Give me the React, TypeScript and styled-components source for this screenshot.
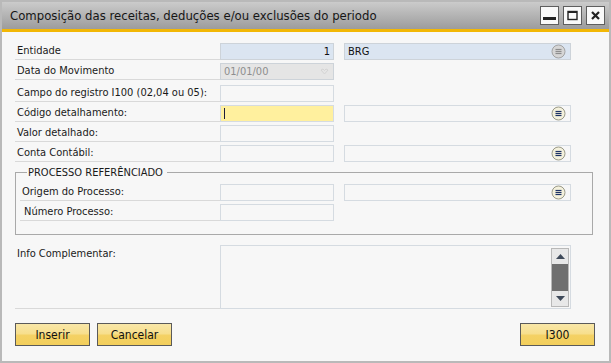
import React from 'react';
import styled, { createGlobalStyle } from 'styled-components';

const GlobalStyle = createGlobalStyle`
  html, body {
    margin: 0;
    padding: 0;
    background: #ffffff;
  }
  * {
    box-sizing: border-box;
  }
`;

const FONT = `"DejaVu Sans Condensed", "Liberation Sans", sans-serif`;

const Window = styled.div`
  width: 611px;
  height: 363px;
  border: 2px solid #b9b9b9;
  background: #f7f7f7;
  display: flex;
  flex-direction: column;
  font-family: ${FONT};
  font-size: 11px;
  color: #1a1a1a;
`;

const TitleBar = styled.div`
  height: 30px;
  flex: none;
  display: flex;
  align-items: center;
  padding: 0 4px 0 8px;
  background: linear-gradient(#cbcbcb, #9c9c9c);
  border-bottom: 3px solid #f2b705;
`;

const Title = styled.div`
  flex: 1;
  font-size: 13px;
  color: #161616;
`;

const TitleButtons = styled.div`
  display: flex;
  gap: 4px;
`;

const TitleButton = styled.div`
  width: 19px;
  height: 19px;
  border: 1px solid #5e5e5e;
  background: #f9f9f9;
  display: flex;
  align-items: center;
  justify-content: center;
`;

const Body = styled.div`
  flex: 1;
  display: flex;
  flex-direction: column;
  padding: 11px 14px 0 13px;
`;

const Row = styled.div<{ $extraTop?: number }>`
  display: grid;
  grid-template-columns: 205px 114px 10px 227px;
  height: 17px;
  margin-top: ${p => p.$extraTop || 0}px;
  margin-bottom: 3px;
`;

const GroupRow = styled(Row)`
  grid-template-columns: 200px 114px 10px 227px;
`;

const Label = styled.div<{ $indent?: number }>`
  border-bottom: 1px solid #d9d9d9;
  padding-left: ${p => 2 + (p.$indent || 0)}px;
  line-height: 15px;
  white-space: nowrap;
`;

type FieldTone = 'plain' | 'blue' | 'gray' | 'focus';

const fieldBg: Record<FieldTone, string> = {
  plain: '#f7f7f7',
  blue: '#dbe5f1',
  gray: '#e5e5e5',
  focus: '#fff09e',
};

const Field = styled.div<{ $tone?: FieldTone; $align?: string }>`
  position: relative;
  height: 17px;
  border: 1px solid ${p => (p.$tone === 'blue' || p.$tone === 'gray' ? '#cdd3d9' : '#d5dbe1')};
  background: ${p => fieldBg[p.$tone || 'plain']};
  display: flex;
  align-items: center;
  justify-content: ${p => p.$align || 'flex-start'};
  padding: 0 3px;
  color: ${p => (p.$tone === 'gray' ? '#8e8e8e' : '#111')};
  white-space: nowrap;
`;

const Spacer = styled.div``;

const IconWrap = styled.span<{ $top?: number }>`
  position: absolute;
  right: 4px;
  top: ${p => p.$top || 0}px;
  display: flex;
`;

const Caret = styled.span`
  width: 1px;
  height: 11px;
  background: #1b1b3a;
`;

const Group = styled.fieldset`
  margin: 1px 2px 0 0;
  padding: 5px 0 10px 4px;
  border: 1px solid #a9a9a9;
  min-width: 0;
`;

const Legend = styled.legend`
  padding: 0 4px 0 1px;
  margin-left: 7px;
  font-size: 11px;
  line-height: 13px;
  color: #1a1a1a;
`;

const InfoRow = styled.div`
  display: grid;
  grid-template-columns: 205px 351px;
  height: 64px;
  margin-top: 10px;
`;

const InfoLabel = styled(Label)`
  padding-top: 1px;
`;

const TextArea = styled.div`
  border: 1px solid #d5dbe1;
  background: #f7f7f7;
  display: flex;
  justify-content: flex-end;
  padding: 2px 1px 1px 0;
`;

const ScrollBar = styled.div`
  width: 18px;
  display: flex;
  flex-direction: column;
  border: 1px solid #b8b8b8;
`;

const ScrollButton = styled.div`
  height: 15px;
  background: #e8e8e8;
  display: flex;
  align-items: center;
  justify-content: center;
`;

const ScrollThumb = styled.div`
  flex: 1;
  background-color: #6f6f6f;
  background-image: radial-gradient(#8a8a8a 0.6px, transparent 0.7px);
  background-size: 2px 2px;
`;

const Footer = styled.div`
  display: flex;
  gap: 7px;
  margin-top: 14px;
`;

const Button = styled.button<{ $push?: boolean }>`
  width: 75px;
  height: 23px;
  margin-left: ${p => (p.$push ? 'auto' : '0')};
  border: 1px solid #5a5a5a;
  background: linear-gradient(#f9e7a8 0%, #f7df8e 45%, #f4d164 55%, #f3cf5c 100%);
  font-family: ${FONT};
  font-size: 12px;
  color: #111;
  padding: 0;
`;

const ListIcon: React.FC<{ disabled?: boolean }> = ({ disabled }) => (
  <svg width="15" height="15" viewBox="0 0 15 15">
    <circle
      cx="7.5"
      cy="7.5"
      r="6.5"
      fill={disabled ? '#d6d6d6' : '#f4f1dc'}
      stroke={disabled ? '#a3a3a3' : '#9b9a88'}
      strokeWidth="1"
    />
    {[5.5, 7.5, 9.5].map(y => (
      <line key={y} x1="4.5" x2="10.5" y1={y} y2={y} stroke={disabled ? '#8d8d8d' : '#1e3366'} strokeWidth="1.2" />
    ))}
  </svg>
);

const DateGlyph = () => (
  <svg width="9" height="7" viewBox="0 0 9 7">
    <path d="M1 2 L3 1 L4.5 2.5 L6 1 L8 2 L4.5 6 Z" fill="none" stroke="#d4d4d4" strokeWidth="1" />
  </svg>
);

const App: React.FC = () => {
  return (
    <>
      <GlobalStyle />
      <Window>
        <TitleBar>
          <Title>Composição das receitas, deduções e/ou exclusões do periodo</Title>
          <TitleButtons>
            <TitleButton>
              <svg width="13" height="13" viewBox="0 0 13 13">
                <rect x="0" y="8" width="13" height="3" fill="#222" />
              </svg>
            </TitleButton>
            <TitleButton>
              <svg width="11" height="11" viewBox="0 0 11 11">
                <rect x="1" y="1.5" width="9" height="8" fill="none" stroke="#222" strokeWidth="1.4" />
                <rect x="1" y="1" width="9" height="2" fill="#222" />
              </svg>
            </TitleButton>
            <TitleButton>
              <svg width="11" height="11" viewBox="0 0 11 11">
                <path d="M2 2 L9 9 M9 2 L2 9" stroke="#222" strokeWidth="2.2" />
              </svg>
            </TitleButton>
          </TitleButtons>
        </TitleBar>

        <Body>
          <Row>
            <Label>Entidade</Label>
            <Field $tone="blue" $align="flex-end">1</Field>
            <Spacer />
            <Field $tone="blue">
              BRG
              <IconWrap>
                <ListIcon disabled />
              </IconWrap>
            </Field>
          </Row>
          <Row>
            <Label>Data do Movimento</Label>
            <Field $tone="gray">
              01/01/00
              <IconWrap $top={4}>
                <DateGlyph />
              </IconWrap>
            </Field>
          </Row>
          <Row $extraTop={2}>
            <Label>Campo do registro I100 (02,04 ou 05):</Label>
            <Field />
          </Row>
          <Row>
            <Label>Código detalhamento:</Label>
            <Field $tone="focus">
              <Caret />
            </Field>
            <Spacer />
            <Field>
              <IconWrap>
                <ListIcon />
              </IconWrap>
            </Field>
          </Row>
          <Row>
            <Label>Valor detalhado:</Label>
            <Field />
          </Row>
          <Row>
            <Label>Conta Contábil:</Label>
            <Field />
            <Spacer />
            <Field>
              <IconWrap>
                <ListIcon />
              </IconWrap>
            </Field>
          </Row>

          <Group>
            <Legend>PROCESSO REFERÊNCIADO</Legend>
            <GroupRow>
              <Label>Origem do Processo:</Label>
              <Field />
              <Spacer />
              <Field>
                <IconWrap>
                  <ListIcon />
                </IconWrap>
              </Field>
            </GroupRow>
            <GroupRow>
              <Label $indent={2}>Número Processo:</Label>
              <Field />
            </GroupRow>
          </Group>

          <InfoRow>
            <InfoLabel>Info Complementar:</InfoLabel>
            <TextArea>
              <ScrollBar>
                <ScrollButton>
                  <svg width="9" height="5" viewBox="0 0 9 5">
                    <path d="M0 5 L4.5 0 L9 5 Z" fill="#3f4a5a" />
                  </svg>
                </ScrollButton>
                <ScrollThumb />
                <ScrollButton>
                  <svg width="9" height="5" viewBox="0 0 9 5">
                    <path d="M0 0 L4.5 5 L9 0 Z" fill="#3f4a5a" />
                  </svg>
                </ScrollButton>
              </ScrollBar>
            </TextArea>
          </InfoRow>

          <Footer>
            <Button>Inserir</Button>
            <Button>Cancelar</Button>
            <Button $push>I300</Button>
          </Footer>
        </Body>
      </Window>
    </>
  );
};

export default App;
